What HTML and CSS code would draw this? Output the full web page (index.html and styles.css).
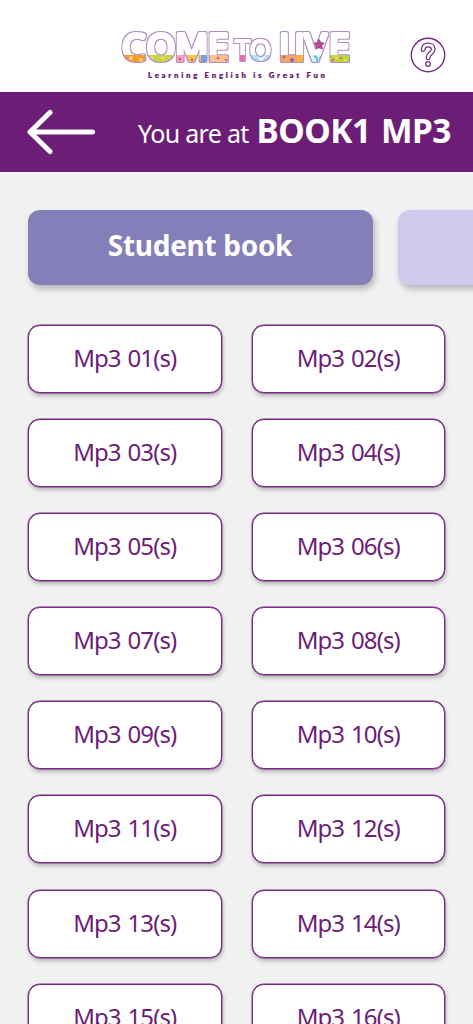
FILE: index.html
```html
<!DOCTYPE html>
<html lang="en">
<head>
<meta charset="utf-8">
<meta name="viewport" content="width=device-width, initial-scale=1">
<title>Book1 MP3</title>
<link rel="stylesheet" href="styles.css">
</head>
<body>
<header class="brand">
  <svg class="logo" width="240" height="68" viewBox="115 20 240 68">
    <defs>
      <pattern id="paint" patternUnits="userSpaceOnUse" x="115" y="20" width="240" height="68" viewBox="115 20 240 68">
        <path fill="#fff" d="M115 20h240v68H115z"/>
        <path fill="#f49a2c" d="M115 55h32v12h-32z"/>
        <path fill="#bdda42" d="M147 55h28v12h-28z"/>
        <path fill="#f7a1bd" d="M175 55h13v12h-13z"/>
        <path fill="#fbc83a" d="M188 55h13v12h-13z"/>
        <path fill="#75a4dc" d="M201 55h9v12h-9z"/>
        <path fill="#fac48b" d="M210 55h23v12h-23z"/>
        <path fill="#f46ca5" d="M233 55h14v12h-14z"/>
        <path fill="#a9e2f7" d="M247 55h27v12h-27z"/>
        <path fill="#f8a45c" d="M278 55h19v12h-19z"/>
        <path fill="#fdb23f" d="M297 55h10v12h-10z"/>
        <path fill="#d9f2fb" d="M307 55h22v12h-22z"/>
        <path fill="#b9d82e" d="M329 55h23v12h-23z"/>
        <g fill="#f9d06a"><circle cx="131" cy="58" r="2.2"/><circle cx="141" cy="60" r="2"/><circle cx="152" cy="58" r="2"/><circle cx="163" cy="58" r="2"/><circle cx="336" cy="58" r="1.5"/><circle cx="345" cy="60" r="1.5"/></g>
        <g fill="#e2559b"><circle cx="180" cy="59" r="1.4"/><circle cx="192" cy="60" r="1.4"/><circle cx="197" cy="58" r="1.2"/><circle cx="218" cy="58" r="1.3"/><circle cx="226" cy="60" r="1.3"/><circle cx="333" cy="60" r="1.2"/><circle cx="341" cy="58" r="1.2"/></g>
        <g fill="#9260b5"><circle cx="284" cy="57" r="1.4"/><circle cx="292" cy="60" r="2"/></g>
        <path d="M258 56l3 4 4-4" fill="none" stroke="#fff" stroke-width="1.6"/>
        <path d="M314 56q4 1 3 6M323 56q-4 1-3 6" fill="none" stroke="#45b5d7" stroke-width="1.5"/>
      </pattern>
      <filter id="outline" x="-10%" y="-20%" width="120%" height="140%">
        <feMorphology in="SourceAlpha" operator="dilate" radius="1" result="grown"/>
        <feFlood flood-color="#b08cc4"/>
        <feComposite in2="grown" operator="in"/>
        <feMerge><feMergeNode/><feMergeNode in="SourceGraphic"/></feMerge>
      </filter>
    </defs>
    <g class="logo-letters" fill="url(#paint)" stroke="url(#paint)" filter="url(#outline)">
      <text y="59.5" font-size="36.5" x="122.2 146.7 175.3 208">COME</text>
      <text class="logo-small" y="60" font-size="27.5" x="235 249.8">TO</text>
      <text y="59.5" font-size="36.5" x="279.3 294.5 304.5 329">LIVE</text>
    </g>
    <path fill="#b94b95" stroke="#a94b98" stroke-width="1.6" stroke-linejoin="round" d="M319 40l1.5 2.8 3.1.4-2.2 2.3.6 3.1-3-1.4-3 1.4.6-3.1-2.2-2.3 3.1-.4z"/>
    <text class="tagline" x="148" y="78.2" textLength="177">Learning English is Great Fun</text>
  </svg>
  <svg class="help" width="36" height="36" viewBox="0 0 36 36" fill="none">
    <circle cx="18" cy="18" r="16.7" stroke="#792a83" stroke-width="1.4"/>
    <path class="mark-edge" d="M13.2 12.5C13.3 9 15.5 8 18.2 8c3 0 5 1.7 5 4.2 0 4.2-5 4-5.2 8.5"/>
    <path class="mark-core" d="M13.2 12.5C13.3 9 15.5 8 18.2 8c3 0 5 1.7 5 4.2 0 4.2-5 4-5.2 8.5"/>
    <circle cx="18" cy="27" r="2.3" stroke="#792a83" stroke-width="1.3"/>
  </svg>
</header>
<div class="titlebar">
  <svg class="back" width="70" height="48" viewBox="0 0 70 48" fill="none" stroke="#fff" stroke-width="5" stroke-linecap="round" stroke-linejoin="round"><path d="M23 4.5L3 24l20 19.5M3 24h62.5"/></svg>
  <h1 class="location"><span class="location-lead">You are at</span><span class="location-name">BOOK1 MP3</span></h1>
</div>
<main class="content">
  <nav class="tabs">
    <div class="tab tab-active"><span>Student book</span></div>
    <div class="tab"></div>
  </nav>
  <div class="tracks">
    <div class="track"><span>Mp3 01(s)</span></div><div class="track"><span>Mp3 02(s)</span></div>
    <div class="track"><span>Mp3 03(s)</span></div><div class="track"><span>Mp3 04(s)</span></div>
    <div class="track"><span>Mp3 05(s)</span></div><div class="track"><span>Mp3 06(s)</span></div>
    <div class="track"><span>Mp3 07(s)</span></div><div class="track"><span>Mp3 08(s)</span></div>
    <div class="track"><span>Mp3 09(s)</span></div><div class="track"><span>Mp3 10(s)</span></div>
    <div class="track"><span>Mp3 11(s)</span></div><div class="track"><span>Mp3 12(s)</span></div>
    <div class="track"><span>Mp3 13(s)</span></div><div class="track"><span>Mp3 14(s)</span></div>
    <div class="track"><span>Mp3 15(s)</span></div><div class="track"><span>Mp3 16(s)</span></div>
  </div>
</main>
</body>
</html>
```
FILE: styles.css
```css
* { box-sizing: border-box; }
body {
  margin: 0;
  height: 1024px;
  overflow: hidden;
  background: #f1f1f1;
  font-family: "Noto Sans", "Open Sans", sans-serif;
}
.brand {
  display: flex;
  justify-content: space-between;
  height: 92px;
  padding: 20px 27px 0 115px;
  background: #fff;
}
.logo, .help, .back { display: block; flex: none; }
.help { margin-top: 17px; }
.logo-letters {
  font-family: "Open Sans", sans-serif;
  font-weight: 400;
  stroke-width: 4px;
  stroke-linejoin: round;
  stroke-linecap: round;
}
.logo-small { stroke-width: 2.2px; }
.tagline {
  font: 800 7.8px Lato, sans-serif;
  fill: #6b1d77;
  stroke: #6b1d77;
  stroke-width: .2px;
}
.mark-edge { stroke: #792a83; stroke-width: 5; stroke-linecap: round; }
.mark-core { stroke: #fff; stroke-width: 2.5; stroke-linecap: round; }
.titlebar {
  display: flex;
  align-items: center;
  justify-content: space-between;
  height: 80px;
  padding: 0 22px 0 27px;
  background: #6c1e77;
  color: #fff;
}
.location {
  display: flex;
  align-items: baseline;
  gap: 8px;
  margin: 0;
  padding-bottom: 4px;
  font-weight: 400;
  white-space: nowrap;
}
.location-lead { font-size: 25px; letter-spacing: -0.7px; }
.location-name {
  font-size: 33.5px;
  font-weight: 700;
  letter-spacing: -0.5px;
  word-spacing: 2px;
}
.content {
  height: 852px;
  padding: 37.5px 27.5px 0;
  overflow: hidden;
}
.tabs { display: flex; gap: 25.5px; }
.tab {
  display: flex;
  flex: none;
  align-items: center;
  justify-content: center;
  width: 345px;
  height: 75px;
  padding-bottom: 4px;
  border-radius: 12px;
  background: #cecbed;
  box-shadow: 2px 4px 6px rgba(0, 0, 0, .25);
  color: #fff;
  font-size: 28px;
  font-weight: 700;
  letter-spacing: -0.3px;
}
.tab-active { background: #847eb9; }
.tracks {
  display: grid;
  grid-template-columns: 193.5px 193.5px;
  grid-auto-rows: 68px;
  gap: 26.1px 30px;
  margin: 40.5px 0 0 .5px;
}
.track {
  display: flex;
  align-items: center;
  justify-content: center;
  padding-bottom: 3px;
  border: 1px solid #792a83;
  border-radius: 12px;
  background: #fff;
  box-shadow: 0 0 0 .4px #792a83, 1px 3px 4px rgba(0, 0, 0, .25);
  color: #6c1e77;
  font-size: 24px;
  letter-spacing: -0.9px;
  word-spacing: 1.5px;
}
```
